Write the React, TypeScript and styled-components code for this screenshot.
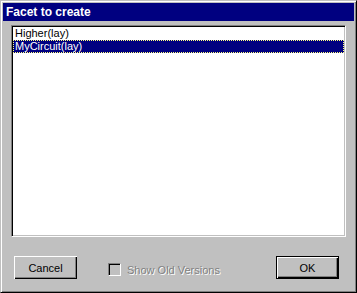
import React from "react";
import styled, { createGlobalStyle } from "styled-components";

const GlobalStyle = createGlobalStyle`
  html, body {
    margin: 0;
    padding: 0;
    background: #c0c0c0;
  }
  body {
    font-family: "Liberation Sans", Arial, sans-serif;
    font-size: 11px;
  }
`;

const Window = styled.div`
  width: 357px;
  height: 293px;
  box-sizing: border-box;
  display: flex;
  flex-direction: column;
  background: #c0c0c0;
  border: 1px solid;
  border-color: #c0c0c0 #000 #000 #c0c0c0;
  box-shadow: inset 1px 1px #fff, inset -1px -1px #808080;
  padding: 2px;
`;

const TitleBar = styled.div`
  height: 18px;
  flex: none;
  display: flex;
  align-items: center;
  background: #000080;
  color: #fff;
  font-size: 12px;
  font-weight: bold;
  line-height: 18px;
  padding-left: 3px;
`;

const Body = styled.div`
  flex: 1;
  display: flex;
  flex-direction: column;
  padding: 4px 8px 11px;
`;

const ListBox = styled.div`
  height: 212px;
  box-sizing: border-box;
  flex: none;
  display: flex;
  flex-direction: column;
  background: #fff;
  border: 1px solid;
  border-color: #808080 #fff #fff #808080;
  box-shadow: inset 1px 1px #000, inset -1px -1px #c0c0c0;
  padding: 1px;
`;

const ListItem = styled.div<{ $selected?: boolean }>`
  height: 13px;
  line-height: 13px;
  padding-left: 2px;
  white-space: nowrap;
  color: ${(p) => (p.$selected ? "#fff" : "#000")};
  background: ${(p) => (p.$selected ? "#000080" : "transparent")};
  outline: ${(p) => (p.$selected ? "1px dotted #ffff80" : "none")};
  outline-offset: -1px;
`;

const Footer = styled.div`
  display: flex;
  align-items: flex-start;
  margin-top: 19px;
  padding: 0 7px 0 3px;
`;

const Button = styled.button<{ $default?: boolean }>`
  width: 63px;
  height: 23px;
  box-sizing: border-box;
  margin: 0;
  padding: 0;
  font: inherit;
  font-size: 11px;
  color: #000;
  background: #c0c0c0;
  border: ${(p) => (p.$default ? "1px solid #000" : "none")};
  box-shadow: inset 1px 1px #fff, inset -1px -1px #000,
    inset -2px -2px #808080;
  margin-left: ${(p) => (p.$default ? "auto" : "0")};
`;

const CheckLabel = styled.label`
  display: flex;
  align-items: center;
  gap: 6px;
  margin-left: 31px;
  margin-top: 7px;
  height: 13px;
  color: #808080;
  text-shadow: 1px 1px #fff;
  white-space: nowrap;
`;

const CheckBox = styled.span`
  width: 13px;
  height: 13px;
  box-sizing: border-box;
  flex: none;
  background: #c0c0c0;
  border: 1px solid;
  border-color: #808080 #fff #fff #808080;
  box-shadow: inset 1px 1px #000, inset -1px -1px #c0c0c0;
`;

const items = ["Higher(lay)", "MyCircuit(lay)"];

const App = () => {
  return (
    <>
      <GlobalStyle />
      <Window>
        <TitleBar>Facet to create</TitleBar>
        <Body>
          <ListBox>
            {items.map((item, i) => (
              <ListItem key={item} $selected={i === 1}>
                {item}
              </ListItem>
            ))}
          </ListBox>
          <Footer>
            <Button>Cancel</Button>
            <CheckLabel>
              <CheckBox />
              Show Old Versions
            </CheckLabel>
            <Button $default>OK</Button>
          </Footer>
        </Body>
      </Window>
    </>
  );
};

export default App;
